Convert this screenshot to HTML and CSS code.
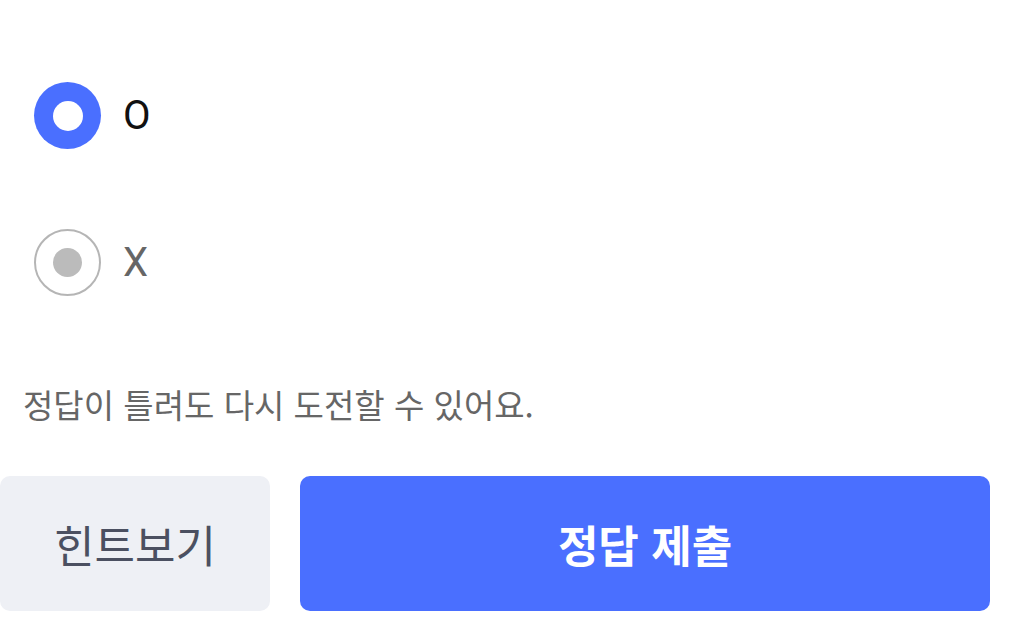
FILE: index.html
```html
<!DOCTYPE html>
<html lang="ko">
<head>
<meta charset="utf-8">
<link rel="stylesheet" href="styles.css">
</head>
<body>
<main class="quiz">
  <div class="options">
    <label class="option">
      <span class="radio radio--on"><span class="radio-dot"></span></span>
      <span class="option-label option-label--on">O</span>
    </label>
    <label class="option">
      <span class="radio radio--off"><span class="radio-dot"></span></span>
      <span class="option-label">X</span>
    </label>
  </div>
  <p class="notice">정답이 틀려도 다시 도전할 수 있어요.</p>
  <div class="actions">
    <button class="btn btn--hint">힌트보기</button>
    <button class="btn btn--submit">정답 제출</button>
  </div>
</main>
</body>
</html>
```
FILE: styles.css
```css
* { box-sizing: border-box; }
html, body { margin: 0; padding: 0; background: #ffffff; }
body {
  font-family: Roboto, "Noto Sans CJK KR", sans-serif;
  width: 1032px;
  height: 644px;
  overflow: hidden;
}
.quiz {
  display: flex;
  flex-direction: column;
  padding-top: 82px;
}
.options {
  display: flex;
  flex-direction: column;
  gap: 80px;
  padding-left: 34px;
}
.option {
  display: flex;
  align-items: center;
  gap: 22px;
  height: 67px;
}
.radio {
  width: 67px;
  height: 67px;
  border-radius: 50%;
  display: flex;
  align-items: center;
  justify-content: center;
  flex: none;
}
.radio--on { background: #4a6fff; }
.radio--on .radio-dot { width: 30px; height: 30px; border-radius: 50%; background: #ffffff; }
.radio--off { border: 2px solid #b5b5b5; background: #fff; }
.radio--off .radio-dot { width: 29px; height: 29px; border-radius: 50%; background: #bbbbbb; }
.option-label {
  font-size: 40px;
  line-height: 1;
  color: #666666;
}
.option-label--on { color: #111111; }
.notice {
  margin: 86px 0 0 23px;
  font-size: 33px;
  line-height: 44px;
  color: #666666;
  font-family: "Noto Sans CJK KR", sans-serif;
}
.actions {
  display: flex;
  gap: 30px;
  margin-top: 50px;
  padding-right: 42px;
}
.btn {
  height: 135px;
  border: none;
  border-radius: 10px;
  font-family: "Noto Sans CJK KR", sans-serif;
  font-size: 44px;
  display: flex;
  align-items: center;
  justify-content: center;
  padding: 0;
}
.btn--hint {
  width: 270px;
  flex: none;
  background: #eef0f5;
  color: #4b5061;
  font-weight: 400;
}
.btn--submit {
  flex: 1;
  background: #4a6fff;
  color: #ffffff;
  font-weight: 700;
}
```
